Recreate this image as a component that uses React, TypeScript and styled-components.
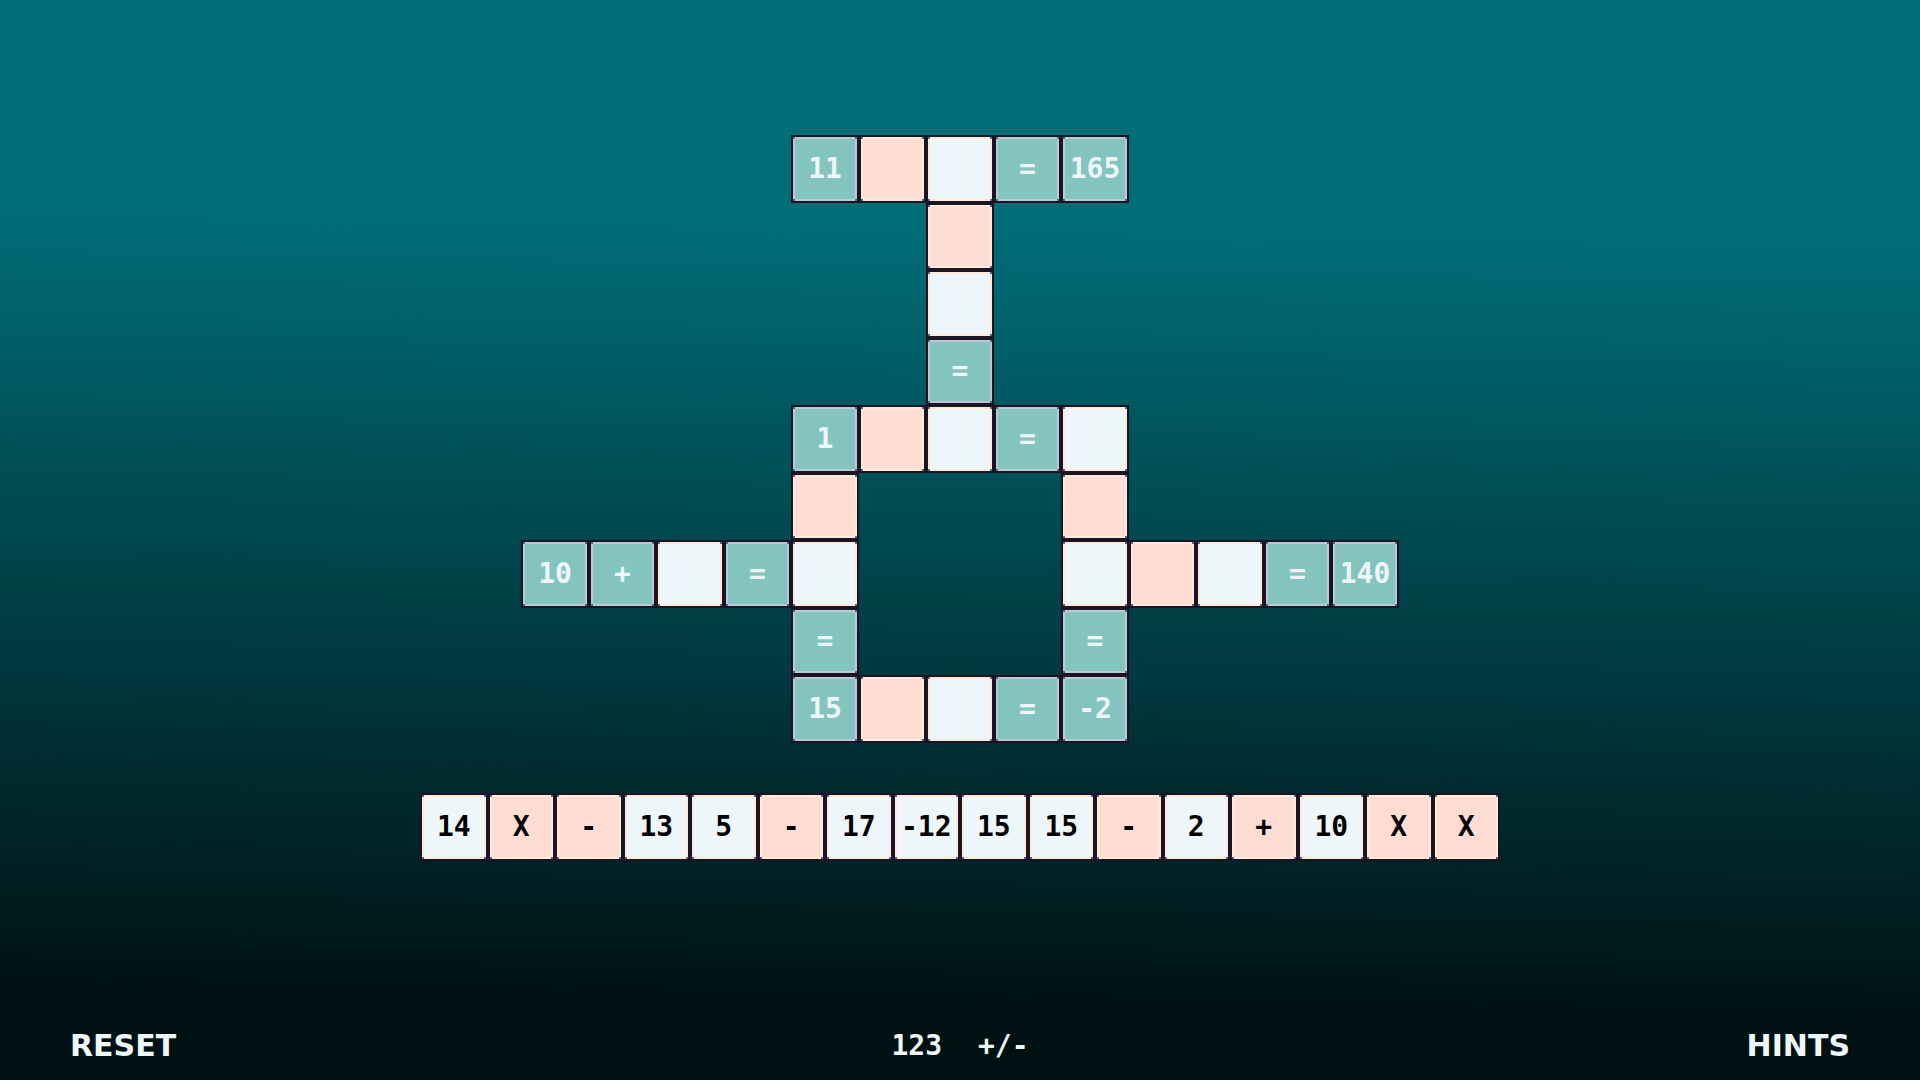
import React from 'react';
import styled, { createGlobalStyle } from 'styled-components';

type Kind = 'given' | 'number' | 'operator';

const GlobalStyle = createGlobalStyle`
  :root {
    --tile: 6.25vh;
  }

  body {
    margin: 0;
    font-family: 'DejaVu Sans Mono', monospace;
    font-weight: 700;
  }
`;

const faces: Record<Kind, string> = {
  given: '#84c4be',
  number: '#edf6f9',
  operator: '#ffddd2',
};

const Screen = styled.main`
  display: flex;
  flex-direction: column;
  align-items: center;
  box-sizing: border-box;
  min-height: 100vh;
  padding-top: calc(var(--tile) * 2);
  background: linear-gradient(181deg, #006d77 22%, #001113 92%);
`;

const Board = styled.section`
  display: grid;
  grid-template-columns: repeat(13, var(--tile));
  grid-auto-rows: var(--tile);
`;

const Tray = styled.section`
  display: flex;
  margin-top: calc(var(--tile) * 0.75);
`;

const Tile = styled.button<{ $kind: Kind }>`
  --edge: ${(p) => (p.$kind === 'given' ? '#bcc8da' : '#ffeadb')};
  --face: ${(p) => faces[p.$kind]};
  --notch: #56648a;
  display: flex;
  align-items: center;
  justify-content: center;
  box-sizing: border-box;
  width: var(--tile);
  height: var(--tile);
  margin: 0;
  padding: 0;
  border: 2px solid #1a1423;
  color: ${(p) => (p.$kind === 'given' ? '#edf6f9' : '#000000')};
  background:
    linear-gradient(var(--notch), var(--notch)) 0 0 / 2px 2px no-repeat,
    linear-gradient(var(--notch), var(--notch)) 100% 0 / 2px 2px no-repeat,
    linear-gradient(var(--notch), var(--notch)) 0 100% / 2px 2px no-repeat,
    linear-gradient(var(--notch), var(--notch)) 100% 100% / 2px 2px no-repeat,
    linear-gradient(var(--face), var(--face)) center / calc(100% - 4px) calc(100% - 4px) no-repeat,
    var(--edge);
  font: inherit;
  font-size: 28px;
  line-height: 32px;
  white-space: nowrap;
  cursor: pointer;
`;

const Cell = styled(Tile)<{ $row: number; $column: number }>`
  grid-row: ${(p) => p.$row};
  grid-column: ${(p) => p.$column};
`;

const Footer = styled.footer`
  display: grid;
  grid-template-columns: 1fr auto 1fr;
  align-items: center;
  box-sizing: border-box;
  width: 100%;
  margin-top: auto;
  padding: 0 70px 16px;
`;

const Filters = styled.div`
  display: flex;
  gap: 36px;
`;

const TextButton = styled.button<{ $align?: 'start' | 'end' }>`
  justify-self: ${(p) => p.$align ?? 'center'};
  margin: 0;
  padding: 0;
  border: 0;
  background: none;
  color: #edf6f9;
  font: inherit;
  font-size: 28px;
  line-height: 36px;
  cursor: pointer;
`;

const WordButton = styled(TextButton)`
  font-family: 'DejaVu Sans', sans-serif;
  font-weight: 700;
  font-size: 30px;
`;

// Runs of neighbouring tiles. N is an open number slot and O an open operator slot;
// any other value is a fixed tile.
const layout: Array<[row: number, column: number, cells: string[]]> = [
  [1, 5, ['11', 'O', 'N', '=', '165']],
  [2, 7, ['O']],
  [3, 7, ['N']],
  [4, 7, ['=']],
  [5, 5, ['1', 'O', 'N', '=', 'N']],
  [6, 5, ['O']],
  [6, 9, ['O']],
  [7, 1, ['10', '+', 'N', '=', 'N']],
  [7, 9, ['N', 'O', 'N', '=', '140']],
  [8, 5, ['=']],
  [8, 9, ['=']],
  [9, 5, ['15', 'O', 'N', '=', '-2']],
];

const pieces = ['14', 'X', '-', '13', '5', '-', '17', '-12', '15', '15', '-', '2', '+', '10', 'X', 'X'];

const kindOfCell = (value: string): Kind =>
  value === 'N' ? 'number' : value === 'O' ? 'operator' : 'given';

export default function App() {
  return (
    <>
      <GlobalStyle />
      <Screen>
        <Board aria-label="Board">
          {layout.flatMap(([row, column, cells]) =>
            cells.map((value, i) => {
              const kind = kindOfCell(value);
              return (
                <Cell
                  key={`${row}-${column + i}`}
                  type="button"
                  $kind={kind}
                  $row={row}
                  $column={column + i}
                  aria-label={kind === 'given' ? undefined : `Empty ${kind} slot`}
                >
                  {kind === 'given' ? value : null}
                </Cell>
              );
            }),
          )}
        </Board>
        <Tray aria-label="Pieces">
          {pieces.map((value, i) => (
            <Tile key={i} type="button" $kind={/\d/.test(value) ? 'number' : 'operator'}>
              {value}
            </Tile>
          ))}
        </Tray>
        <Footer>
          <WordButton type="button" $align="start">RESET</WordButton>
          <Filters>
            <TextButton type="button">123</TextButton>
            <TextButton type="button">+/-</TextButton>
          </Filters>
          <WordButton type="button" $align="end">HINTS</WordButton>
        </Footer>
      </Screen>
    </>
  );
}
